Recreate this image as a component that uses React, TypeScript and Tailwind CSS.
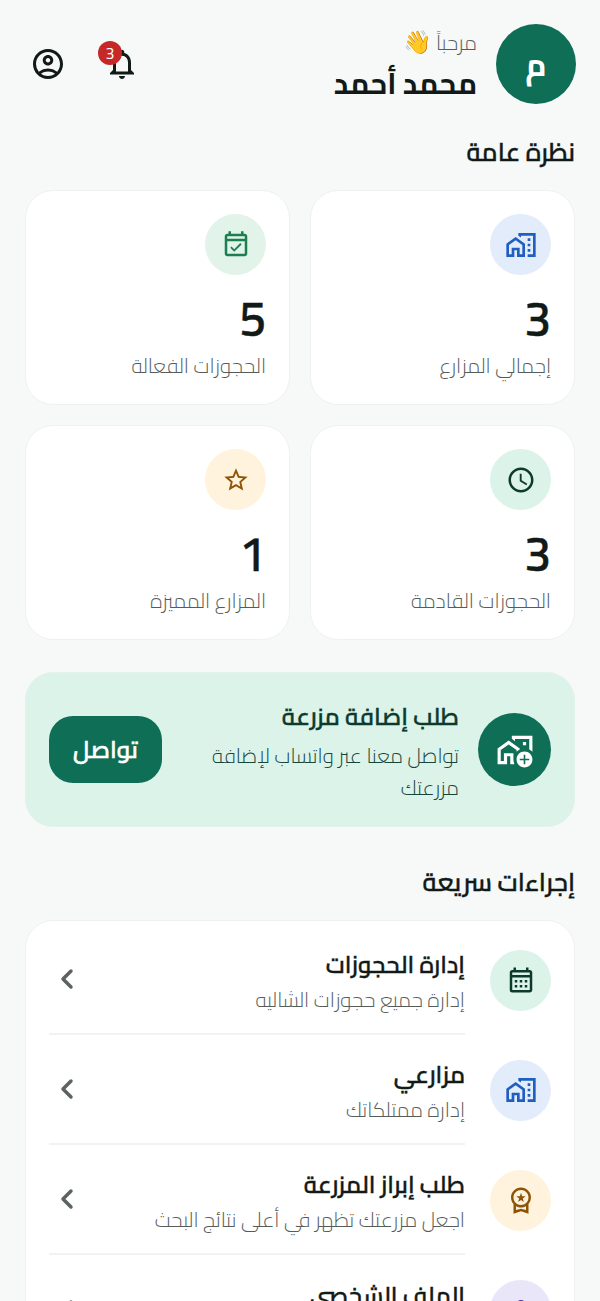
import type { ReactNode } from "react";
import { ChevronLeft } from "lucide-react";
import {
  MdOutlineAccountCircle,
  MdOutlineNotifications,
  MdOutlineMapsHomeWork,
  MdOutlineEventAvailable,
  MdOutlineSchedule,
  MdOutlineStarBorder,
  MdOutlineAddHomeWork,
  MdOutlineCalendarMonth,
  MdOutlineWorkspacePremium,
  MdOutlinePerson,
} from "react-icons/md";

const stats = [
  { value: "3", label: "إجمالي المزارع", circle: "bg-[#e3ecfb]", color: "text-[#1f5fbf]", icon: <MdOutlineMapsHomeWork size={32} /> },
  { value: "5", label: "الحجوزات الفعالة", circle: "bg-[#e2f3e9]", color: "text-[#1b7f4f]", icon: <MdOutlineEventAvailable size={30} /> },
  { value: "3", label: "الحجوزات القادمة", circle: "bg-[#dcf3ea]", color: "text-[#0c3b2e]", icon: <MdOutlineSchedule size={30} /> },
  { value: "1", label: "المزارع المميزة", circle: "bg-[#fff3de]", color: "text-[#8f5306]", icon: <MdOutlineStarBorder size={28} /> },
];

const actions = [
  { title: "إدارة الحجوزات", sub: "إدارة جميع حجوزات الشاليه", circle: "bg-[#dcf3ea]", color: "text-[#0c3b2e]", icon: <MdOutlineCalendarMonth size={30} /> },
  { title: "مزارعي", sub: "إدارة ممتلكاتك", circle: "bg-[#e3ecfb]", color: "text-[#1f5fbf]", icon: <MdOutlineMapsHomeWork size={32} /> },
  { title: "طلب إبراز المزرعة", sub: "اجعل مزرعتك تظهر في أعلى نتائج البحث", circle: "bg-[#fff3de]", color: "text-[#8f5306]", icon: <MdOutlineWorkspacePremium size={30} /> },
  { title: "الملف الشخصي", sub: "إدارة معلوماتك الشخصية", circle: "bg-[#e9e6fa]", color: "text-[#4a2fb0]", icon: <MdOutlinePerson size={30} /> },
];

function Circle({ className, children }: { className: string; children: ReactNode }) {
  return (
    <div className={`w-[61px] h-[61px] rounded-full flex items-center justify-center shrink-0 ${className}`}>
      {children}
    </div>
  );
}

export default function App() {
  return (
    <div
      dir="rtl"
      className="h-[1301px] overflow-hidden bg-[#f6f9f8] px-[25px] text-[#111a17] font-['Cairo','Noto_Sans',sans-serif]"
    >
      <header className="flex items-center justify-between pt-[24px] h-[104px] -mr-px">
        <div className="flex items-center gap-[19px]">
          <div className="w-[80px] h-[80px] rounded-full bg-[#0f6e56] flex items-center justify-center text-white text-[32px] font-bold">
            م
          </div>
          <div className="pt-[4px]">
            <p className="text-[20.8px] leading-[28px] font-light text-[#555c59]">
              مرحباً <span className="text-[23px]">👋</span>
            </p>
            <h1 className="mt-[7px] text-[29.3px] leading-[40px] font-bold">محمد أحمد</h1>
          </div>
        </div>
        <div className="flex items-center gap-[38px] pl-[5px]">
          <div className="relative">
            <MdOutlineNotifications size={36} className="text-[#111a17]" />
            <span className="absolute top-[-5px] right-[18px] w-[24px] h-[24px] rounded-full bg-[#c62828] text-white text-[16px] flex items-center justify-center">
              3
            </span>
          </div>
          <MdOutlineAccountCircle size={36} className="text-[#111a17]" />
        </div>
      </header>

      <h2 className="mt-[30px] text-[25.2px] leading-[36px] font-semibold [-webkit-text-stroke:0.4px]">نظرة عامة</h2>

      <div className="mt-[20px] grid grid-cols-2 gap-x-[20px] gap-y-[20px]">
        {stats.map((s) => (
          <div key={s.label} className="h-[215px] rounded-[28px] bg-white border border-[#eef1f0] px-[23px] pt-[23px]">
            <Circle className={`${s.circle} ${s.color}`}>{s.icon}</Circle>
            <div className="mt-[11px] text-[48px] leading-[64px] font-semibold [-webkit-text-stroke:0.5px]">{s.value}</div>
            <div className="mt-[2px] text-[20.8px] leading-[28px] font-light text-[#555c59]">{s.label}</div>
          </div>
        ))}
      </div>

      <section className="mt-[32px] h-[155px] rounded-[28px] bg-[#dcf3ea] border border-[#e2f2ec] px-[23px] flex items-center gap-[19px]">
        <div className="w-[73px] h-[73px] rounded-full bg-[#0f6e56] text-white flex items-center justify-center shrink-0">
          <MdOutlineAddHomeWork size={38} />
        </div>
        <div className="flex-1 pt-[4px]">
          <h3 className="text-[24px] leading-[34px] font-semibold text-[#0c3b2e] [-webkit-text-stroke:0.4px]">طلب إضافة مزرعة</h3>
          <p className="mt-[6px] text-[20.8px] leading-[32px] font-light text-[#16453a]">تواصل معنا عبر واتساب لإضافة مزرعتك</p>
        </div>
        <div className="w-[113px] h-[67px] rounded-[24px] bg-[#0f6e56] text-white text-[24px] font-semibold flex items-center justify-center shrink-0 [-webkit-text-stroke:0.5px]">
          تواصل
        </div>
      </section>

      <h2 className="mt-[37px] text-[25.2px] leading-[36px] font-semibold [-webkit-text-stroke:0.4px]">إجراءات سريعة</h2>

      <div className="mt-[20px] rounded-[28px] bg-white border border-[#eef1f0] px-[23px] pt-[4px]">
        {actions.map((a, i) => (
          <div key={a.title} className="flex items-center h-[110px] gap-[25px]">
            <Circle className={`${a.circle} ${a.color}`}>{a.icon}</Circle>
            <div className={`flex-1 h-full flex items-center ${i < actions.length - 1 ? "border-b-2 border-[#f0f3f2]" : ""}`}>
              <div className="flex-1 pt-[8px]">
                <div className="text-[23.7px] leading-[34px] font-semibold [-webkit-text-stroke:0.4px]">{a.title}</div>
                <div className="text-[20.8px] leading-[36px] font-light text-[#555c59]">{a.sub}</div>
              </div>
              <ChevronLeft size={32} strokeWidth={2.6} className="ml-[2px] text-[#5b625f]" />
            </div>
          </div>
        ))}
      </div>
    </div>
  );
}
